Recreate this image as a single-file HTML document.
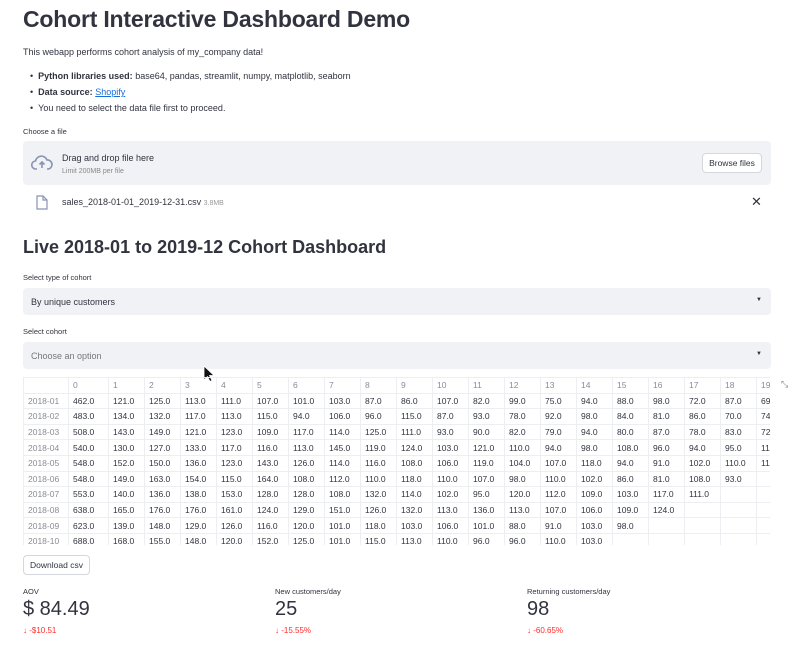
<!DOCTYPE html>
<html><head><meta charset="utf-8"><style>
*{box-sizing:border-box;margin:0;padding:0}
body{width:800px;height:663px;overflow:hidden;background:#fff;font-family:"Liberation Sans",sans-serif;color:#31333f;position:relative}
.a{position:absolute}
h1{position:absolute;left:23px;top:6px;font-size:23px;font-weight:700;letter-spacing:-0.2px}
h2{position:absolute;left:23px;top:237px;font-size:18px;font-weight:600}
.s{font-size:9px}
.box{background:#f0f2f6;border-radius:4px}
table{border-collapse:collapse;font-size:8.5px;table-layout:fixed}
td{border:1px solid #eceef2;height:15.6px;padding-left:4px;white-space:nowrap;overflow:hidden}
tr:first-child td,td:first-child{color:#8a8c95}
</style></head><body>
<h1>Cohort Interactive Dashboard Demo</h1>
<div class="a s" style="left:23px;top:47px">This webapp performs cohort analysis of my_company data!</div>
<div class="a s" style="left:30px;top:71px">• &nbsp;<b>Python libraries used:</b> base64, pandas, streamlit, numpy, matplotlib, seaborn</div>
<div class="a s" style="left:30px;top:87px">• &nbsp;<b>Data source:</b> <span style="color:#1a6ed8;text-decoration:underline">Shopify</span></div>
<div class="a s" style="left:30px;top:103px">• &nbsp;You need to select the data file first to proceed.</div>
<div class="a" style="left:23px;top:127px;font-size:7.5px">Choose a file</div>
<div class="a box" style="left:23px;top:141px;width:748px;height:44px"></div>
<svg class="a" style="left:31px;top:155px" width="22" height="16" viewBox="0 0 22 16"><path d="M6 14H5a4 4 0 0 1-.5-8A6 6 0 0 1 16 5a4.5 4.5 0 0 1 1 9h-1" fill="none" stroke="#8a93b0" stroke-width="1.6"/><path d="M11 13V7M8.5 9.5 11 7l2.5 2.5" fill="none" stroke="#8a93b0" stroke-width="1.6"/></svg>
<div class="a s" style="left:62px;top:153px">Drag and drop file here</div>
<div class="a" style="left:62px;top:168px;font-size:7px;color:#888">Limit 200MB per file</div>
<div class="a" style="left:702px;top:153px;width:60px;height:20px;border:1px solid #d5d7de;border-radius:4px;background:#fff;font-size:8.5px;text-align:center;line-height:18px">Browse files</div>
<svg class="a" style="left:36px;top:195px" width="12" height="15" viewBox="0 0 12 15"><path d="M1 1h6l4 4v9H1z M7 1v4h4" fill="none" stroke="#8a93b0" stroke-width="1.2"/></svg>
<div class="a s" style="left:62px;top:197px">sales_2018-01-01_2019-12-31.csv <span style="font-size:7px;color:#999">3.8MB</span></div>
<div class="a" style="left:751px;top:194px;font-size:13px">✕</div>
<h2>Live 2018-01 to 2019-12 Cohort Dashboard</h2>
<div class="a" style="left:23px;top:273px;font-size:7.5px">Select type of cohort</div>
<div class="a box s" style="left:23px;top:288px;width:748px;height:27px;padding:9px 8px">By unique customers<span style="position:absolute;right:9px;top:9px;font-size:6px">▼</span></div>
<div class="a" style="left:23px;top:327px;font-size:7.5px">Select cohort</div>
<div class="a box s" style="left:23px;top:342px;width:748px;height:27px;padding:9px 8px;color:#777">Choose an option<span style="position:absolute;right:9px;top:9px;font-size:6px;color:#31333f">▼</span></div>
<svg class="a" style="left:203px;top:365px" width="12" height="18" viewBox="0 0 12 18"><path d="M1 1v14l3.5-3.5 2.5 5 2-1-2.5-5H11z" fill="#111" stroke="#fff" stroke-width=".8"/></svg>
<div class="a" style="left:23px;top:377px;width:747px;height:168px;overflow:hidden">
<table style="width:775px"><colgroup><col style="width:45px"><col style="width:40px"><col span="18" style="width:36px"><col style="width:42px"></colgroup>
<tr><td></td><td>0</td><td>1</td><td>2</td><td>3</td><td>4</td><td>5</td><td>6</td><td>7</td><td>8</td><td>9</td><td>10</td><td>11</td><td>12</td><td>13</td><td>14</td><td>15</td><td>16</td><td>17</td><td>18</td><td>19</td></tr>
<tr><td>2018-01</td><td>462.0</td><td>121.0</td><td>125.0</td><td>113.0</td><td>111.0</td><td>107.0</td><td>101.0</td><td>103.0</td><td>87.0</td><td>86.0</td><td>107.0</td><td>82.0</td><td>99.0</td><td>75.0</td><td>94.0</td><td>88.0</td><td>98.0</td><td>72.0</td><td>87.0</td><td>69.0</td></tr>
<tr><td>2018-02</td><td>483.0</td><td>134.0</td><td>132.0</td><td>117.0</td><td>113.0</td><td>115.0</td><td>94.0</td><td>106.0</td><td>96.0</td><td>115.0</td><td>87.0</td><td>93.0</td><td>78.0</td><td>92.0</td><td>98.0</td><td>84.0</td><td>81.0</td><td>86.0</td><td>70.0</td><td>74.0</td></tr>
<tr><td>2018-03</td><td>508.0</td><td>143.0</td><td>149.0</td><td>121.0</td><td>123.0</td><td>109.0</td><td>117.0</td><td>114.0</td><td>125.0</td><td>111.0</td><td>93.0</td><td>90.0</td><td>82.0</td><td>79.0</td><td>94.0</td><td>80.0</td><td>87.0</td><td>78.0</td><td>83.0</td><td>72.0</td></tr>
<tr><td>2018-04</td><td>540.0</td><td>130.0</td><td>127.0</td><td>133.0</td><td>117.0</td><td>116.0</td><td>113.0</td><td>145.0</td><td>119.0</td><td>124.0</td><td>103.0</td><td>121.0</td><td>110.0</td><td>94.0</td><td>98.0</td><td>108.0</td><td>96.0</td><td>94.0</td><td>95.0</td><td>113.0</td></tr>
<tr><td>2018-05</td><td>548.0</td><td>152.0</td><td>150.0</td><td>136.0</td><td>123.0</td><td>143.0</td><td>126.0</td><td>114.0</td><td>116.0</td><td>108.0</td><td>106.0</td><td>119.0</td><td>104.0</td><td>107.0</td><td>118.0</td><td>94.0</td><td>91.0</td><td>102.0</td><td>110.0</td><td>113.0</td></tr>
<tr><td>2018-06</td><td>548.0</td><td>149.0</td><td>163.0</td><td>154.0</td><td>115.0</td><td>164.0</td><td>108.0</td><td>112.0</td><td>110.0</td><td>118.0</td><td>110.0</td><td>107.0</td><td>98.0</td><td>110.0</td><td>102.0</td><td>86.0</td><td>81.0</td><td>108.0</td><td>93.0</td><td></td></tr>
<tr><td>2018-07</td><td>553.0</td><td>140.0</td><td>136.0</td><td>138.0</td><td>153.0</td><td>128.0</td><td>128.0</td><td>108.0</td><td>132.0</td><td>114.0</td><td>102.0</td><td>95.0</td><td>120.0</td><td>112.0</td><td>109.0</td><td>103.0</td><td>117.0</td><td>111.0</td><td></td><td></td></tr>
<tr><td>2018-08</td><td>638.0</td><td>165.0</td><td>176.0</td><td>176.0</td><td>161.0</td><td>124.0</td><td>129.0</td><td>151.0</td><td>126.0</td><td>132.0</td><td>113.0</td><td>136.0</td><td>113.0</td><td>107.0</td><td>106.0</td><td>109.0</td><td>124.0</td><td></td><td></td><td></td></tr>
<tr><td>2018-09</td><td>623.0</td><td>139.0</td><td>148.0</td><td>129.0</td><td>126.0</td><td>116.0</td><td>120.0</td><td>101.0</td><td>118.0</td><td>103.0</td><td>106.0</td><td>101.0</td><td>88.0</td><td>91.0</td><td>103.0</td><td>98.0</td><td></td><td></td><td></td><td></td></tr>
<tr><td>2018-10</td><td>688.0</td><td>168.0</td><td>155.0</td><td>148.0</td><td>120.0</td><td>152.0</td><td>125.0</td><td>101.0</td><td>115.0</td><td>113.0</td><td>110.0</td><td>96.0</td><td>96.0</td><td>110.0</td><td>103.0</td><td></td><td></td><td></td><td></td><td></td></tr>
</table></div>
<div class="a" style="left:781px;top:379px;font-size:9px;color:#888">⤡</div>
<div class="a" style="left:23px;top:555px;width:67px;height:20px;border:1px solid #d5d7de;border-radius:4px;font-size:8.5px;text-align:center;line-height:18px">Download csv</div>
<div class="a" style="left:23px;top:587px;font-size:7.5px">AOV</div>
<div class="a" style="left:23px;top:598px;font-size:20px">$ 84.49</div>
<div class="a" style="left:23px;top:626px;font-size:8px;color:#ff2b2b">↓ -$10.51</div>
<div class="a" style="left:275px;top:587px;font-size:7.5px">New customers/day</div>
<div class="a" style="left:275px;top:598px;font-size:20px">25</div>
<div class="a" style="left:275px;top:626px;font-size:8px;color:#ff2b2b">↓ -15.55%</div>
<div class="a" style="left:527px;top:587px;font-size:7.5px">Returning customers/day</div>
<div class="a" style="left:527px;top:598px;font-size:20px">98</div>
<div class="a" style="left:527px;top:626px;font-size:8px;color:#ff2b2b">↓ -60.65%</div>
</body></html>
